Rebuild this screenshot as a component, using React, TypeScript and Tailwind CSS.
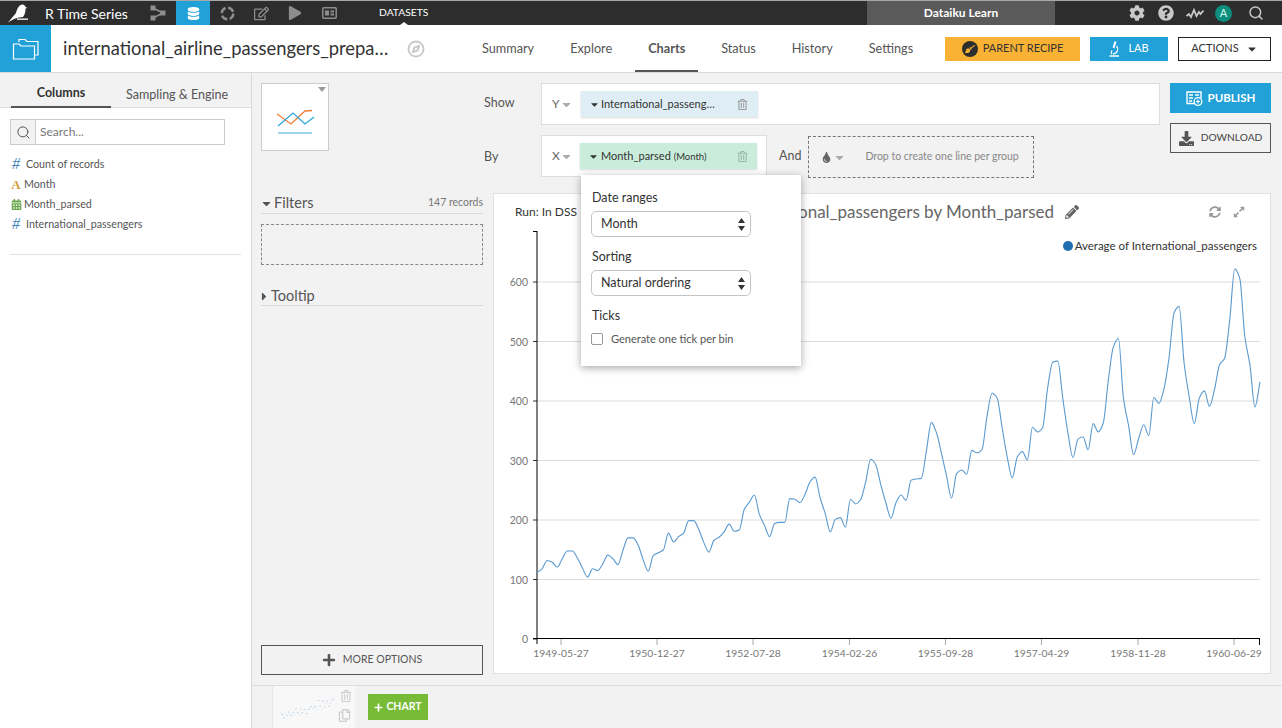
import { Compass, Search } from "lucide-react"
import {
  FaCog,
  FaQuestionCircle,
  FaDatabase,
  FaRegEdit,
  FaPlay,
  FaBroom,
  FaDownload,
  FaPencilAlt,
  FaSyncAlt,
  FaExpandAlt,
  FaPlus,
  FaRegTrashAlt,
  FaTint,
  FaCaretDown,
  FaRegCopy,
  FaCalendarAlt,
} from "react-icons/fa"

const passengers = [
  112, 118, 132, 129, 121, 135, 148, 148, 136, 119, 104, 118, 115, 126, 141, 135, 125, 149, 170, 170, 158, 133, 114,
  140, 145, 150, 178, 163, 172, 178, 199, 199, 184, 162, 146, 166, 171, 180, 193, 181, 183, 218, 230, 242, 209, 191,
  172, 194, 196, 196, 236, 235, 229, 243, 264, 272, 237, 211, 180, 201, 204, 188, 235, 227, 234, 264, 302, 293, 259,
  229, 203, 229, 242, 233, 267, 269, 270, 315, 364, 347, 312, 274, 237, 278, 284, 277, 317, 313, 318, 374, 413, 405,
  355, 306, 271, 306, 315, 301, 356, 348, 355, 422, 465, 467, 404, 347, 305, 336, 340, 318, 362, 348, 363, 435, 491,
  505, 404, 359, 310, 337, 360, 342, 406, 396, 420, 472, 548, 559, 463, 407, 362, 405, 417, 391, 419, 461, 472, 535,
  622, 606, 508, 461, 390, 432,
]

const xTicks = [
  { x: 561, label: "1949-05-27" },
  { x: 657, label: "1950-12-27" },
  { x: 753, label: "1952-07-28" },
  { x: 849.5, label: "1954-02-26" },
  { x: 945.5, label: "1955-09-28" },
  { x: 1041.5, label: "1957-04-29" },
  { x: 1138, label: "1958-11-28" },
  { x: 1234, label: "1960-06-29" },
]

const yTicks = [0, 100, 200, 300, 400, 500, 600]
const toX = (i: number) => 537 + (i * 723) / 143
const toY = (v: number) => 639 - v * 0.595

// monotone cubic, same look as the d3 line in the screenshot
function linePath(values: number[]) {
  const pts = values.map((v, i) => [toX(i), toY(v)])
  const h = pts[1][0] - pts[0][0]
  const slopes = pts.slice(1).map((p, i) => (p[1] - pts[i][1]) / h)
  const tangent = pts.map((_, i) => {
    if (i === 0) return slopes[0]
    if (i === pts.length - 1) return slopes[i - 1]
    const a = slopes[i - 1]
    const b = slopes[i]
    return a * b <= 0 ? 0 : (2 * a * b) / (a + b)
  })
  let d = `M${pts[0][0]} ${pts[0][1]}`
  for (let i = 0; i < pts.length - 1; i++) {
    d += `C${pts[i][0] + h / 3} ${pts[i][1] + (tangent[i] * h) / 3} ${pts[i + 1][0] - h / 3} ${
      pts[i + 1][1] - (tangent[i + 1] * h) / 3
    } ${pts[i + 1][0]} ${pts[i + 1][1]}`
  }
  return d
}

function Bird() {
  return (
    <svg width="22" height="20" viewBox="0 0 22 20" className="text-white">
      <path
        d="M1 19.500L9 10C10 6 12 1.500 15.500 1.500C17 1.500 18 2.500 18.500 4L20.500 5L18.500 5.500C18.500 9 18 11 16 14L12 14.500C8 15 5 17 1 19.500Z"
        fill="currentColor"
      />
      <rect x="10" y="15.500" width="11" height="1.300" fill="currentColor" />
    </svg>
  )
}

function FolderIcon() {
  return (
    <svg width="27" height="22" viewBox="0 0 27 22" fill="none" stroke="white" strokeWidth="1.200">
      <path d="M7 4V1.500H13L15 3.500H26V17H22.500" />
      <path d="M1.500 6H7L9 8H22.500V21H1.500Z" />
    </svg>
  )
}

function FlowIcon() {
  return (
    <svg width="16" height="16" viewBox="0 0 16 16" className="text-[#8d8d8d]">
      <path d="M3 3L13 8L3 13" fill="none" stroke="currentColor" strokeWidth="1.500" />
      <rect x="0.500" y="0.500" width="5" height="5" fill="currentColor" />
      <rect x="0.500" y="10.500" width="5" height="5" fill="currentColor" />
      <rect x="10" y="5.500" width="5.500" height="5" fill="currentColor" />
    </svg>
  )
}

function RingIcon() {
  return (
    <svg width="15" height="15" viewBox="0 0 15 15" className="text-[#8d8d8d]">
      <circle cx="7.500" cy="7.500" r="5.800" fill="none" stroke="currentColor" strokeWidth="2.400" strokeDasharray="6.500 2.600" />
    </svg>
  )
}

function PanelIcon() {
  return (
    <svg width="15" height="12" viewBox="0 0 15 12" className="text-[#8d8d8d]">
      <rect x="0.800" y="0.800" width="13.400" height="10.400" rx="1" fill="none" stroke="currentColor" strokeWidth="1.500" />
      <rect x="3" y="3.500" width="4" height="5" fill="currentColor" />
      <rect x="8.500" y="3.500" width="3.500" height="2" fill="currentColor" />
      <rect x="8.500" y="6.500" width="3.500" height="2" fill="currentColor" />
    </svg>
  )
}

function LabIcon() {
  return (
    <svg width="11" height="16" viewBox="0 0 11 16" fill="none" stroke="white">
      <path d="M6.500 0.500L4.500 7" strokeWidth="2" />
      <path d="M7.500 5C10 8 8.500 12.500 4 13" strokeWidth="1.200" />
      <path d="M3 9.500C2 11 2 12 3 13" strokeWidth="1.200" />
      <path d="M0.500 15H10" strokeWidth="1.500" />
    </svg>
  )
}

function PublishIcon() {
  return (
    <svg width="17" height="15" viewBox="0 0 17 15" className="text-white">
      <path d="M9 12.500H1V1H15V7" fill="none" stroke="currentColor" strokeWidth="1.400" />
      <path d="M3 4H7M3 7H7M3 10H6M9 4H13" stroke="currentColor" strokeWidth="1.400" />
      <circle cx="12" cy="10.500" r="3.800" fill="#22a0d8" stroke="currentColor" strokeWidth="1.300" />
      <path d="M12 8.500V12.500M10 10.500H14" stroke="currentColor" strokeWidth="1.200" />
    </svg>
  )
}

function SelectBox({ value }: { value: string }) {
  return (
    <div className="relative w-[160px] h-[26px]">
      <select
        defaultValue={value}
        className="appearance-none w-full h-full bg-white border border-[#c4c4c4] rounded-[5px] pl-[9px] text-[12.500px] text-[#333] outline-none"
      >
        <option>{value}</option>
      </select>
      <svg width="7" height="13" viewBox="0 0 7 13" className="absolute right-[6px] top-[7px] pointer-events-none">
        <path d="M3.500 0L7 5H0ZM3.500 13L0 8H7Z" fill="#333" />
      </svg>
    </div>
  )
}

function ColumnRow({ icon, label, pad }: { icon: React.ReactNode; label: string; pad: string }) {
  return (
    <div className="flex items-center h-[20px] text-[10.700px] text-[#555]">
      <span className="w-[12px] flex justify-center">{icon}</span>
      <span className={pad}>{label}</span>
    </div>
  )
}

export default function App() {
  const tabs = ["Summary", "Explore", "Charts", "Status", "History", "Settings"]
  const hash = <span className="font-['Liberation_Serif',serif] italic text-[16px] leading-none text-[#3b7fb5]">#</span>

  return (
    <div className="w-[1282px] h-[728px] overflow-hidden flex flex-col bg-[#f2f2f2] text-[#333] font-['Lato','Noto_Sans',sans-serif]">
      <header className="h-[25px] shrink-0 bg-[#2d2d2d] border-t border-[#a8a8a8] flex items-stretch text-white">
        <div className="w-[45px] pl-[7px] flex items-center">
          <Bird />
        </div>
        <div className="w-[97px] flex items-center text-[14px]">R Time Series</div>
        <div className="w-[34px] -ml-[1px] flex items-center justify-center">
          <FlowIcon />
        </div>
        <div className="w-[34px] ml-[1px] flex items-center justify-center bg-[#22a0d8]">
          <FaDatabase size={13} />
        </div>
        <div className="w-[34px] flex items-center justify-center">
          <RingIcon />
        </div>
        <div className="w-[34px] flex items-center justify-center">
          <FaRegEdit size={15} className="text-[#8d8d8d]" />
        </div>
        <div className="w-[34px] flex items-center justify-center">
          <FaPlay size={14} className="text-[#8d8d8d]" />
        </div>
        <div className="w-[34px] flex items-center justify-center">
          <PanelIcon />
        </div>
        <div className="relative ml-[33px] flex items-center text-[10.300px]">
          DATASETS
          <span className="absolute left-1/2 -translate-x-1/2 bottom-0 w-0 h-0 border-x-[4px] border-x-transparent border-b-[3px] border-b-white" />
        </div>
        <div className="flex-1" />
        <div className="w-[188px] bg-[#5a5a5a] flex items-center justify-center text-[12px] font-bold">
          Dataiku Learn
        </div>
        <div className="w-[227px] pl-[67px] flex items-center text-[#c8c8c8]">
          <span className="w-[29px] flex justify-center">
            <FaCog size={16} />
          </span>
          <span className="w-[29px] flex justify-center">
            <FaQuestionCircle size={16} />
          </span>
          <span className="w-[29px] flex justify-center">
            <svg width="18" height="11" viewBox="0 0 18 11">
              <path d="M0.500 8L3 6L5 9L8 2L10.500 8L13 4L14.500 6L17.500 2.500" fill="none" stroke="currentColor" strokeWidth="1.800" />
            </svg>
          </span>
          <span className="w-[29px] flex justify-center">
            <span className="w-[17px] h-[17px] rounded-full bg-[#0b8f7c] text-[11px] flex items-center justify-center text-[#d8f5ee]">
              A
            </span>
          </span>
          <span className="w-[29px] ml-[3px] flex justify-center">
            <Search size={16} strokeWidth={2.200} />
          </span>
        </div>
      </header>

      <nav className="h-[48px] shrink-0 bg-white border-b border-[#d9d9d9] flex items-stretch">
        <div className="w-[51px] bg-[#22a0d8] flex items-center justify-center text-white">
          <FolderIcon />
        </div>
        <div className="w-[431px] pl-[12px] flex items-center">
          <span className="text-[18.400px] text-[#333] whitespace-nowrap w-[344px]">
            international_airline_passengers_prepa…
          </span>
          <Compass size={18} strokeWidth={2.500} className="text-[#c9c9c9]" />
        </div>
        <div className="flex items-stretch gap-[36px] pt-[1px] text-[12.700px] text-[#555]">
          {tabs.map((t) => (
            <div key={t} className={t === "Charts" ? "relative flex items-center font-bold" : "flex items-center"}>
              {t}
              {t === "Charts" && <span className="absolute -left-[13px] -right-[13px] bottom-0 h-[2px] bg-[#555]" />}
            </div>
          ))}
        </div>
        <div className="ml-auto mr-[11px] flex items-center gap-[10px]">
          <button className="w-[135px] h-[24px] bg-[#f9b233] flex items-center justify-center gap-[5px] text-[11px] text-[#333]">
            <span className="w-[16px] h-[16px] rounded-full bg-[#2d2d2d] flex items-center justify-center text-[#f9b233]">
              <FaBroom size={10} />
            </span>
            PARENT RECIPE
          </button>
          <button className="w-[78px] h-[24px] bg-[#22a0d8] flex items-center justify-center gap-[8px] text-[11px] text-white">
            <LabIcon />
            LAB
          </button>
          <button className="w-[93px] h-[24px] border border-[#222] bg-white flex items-center justify-center gap-[7px] text-[11px] text-[#333]">
            ACTIONS
            <FaCaretDown size={12} />
          </button>
        </div>
      </nav>

      <div className="flex-1 min-h-0 flex">
        <aside className="w-[252px] shrink-0 bg-white border-r border-[#d9d9d9] flex flex-col">
          <div className="h-[35px] bg-[#f2f2f2] border-b border-[#ddd] flex pl-[11px] text-[12.500px]">
            <div className="w-[100px] h-[35px] pt-[8px] border-b-2 border-[#555] flex items-center justify-center font-bold">
              Columns
            </div>
            <div className="w-[132px] pt-[10px] flex items-center justify-center text-[#555]">Sampling &amp; Engine</div>
          </div>
          <div className="px-[10px] pt-[11px]">
            <div className="w-[215px] h-[26px] border border-[#ccc] flex">
              <div className="w-[25px] bg-[#f2f2f2] border-r border-[#ccc] flex items-center justify-center text-[#555]">
                <Search size={15} strokeWidth={1.600} />
              </div>
              <input
                placeholder="Search..."
                className="flex-1 min-w-0 pl-[4px] text-[12px] outline-none placeholder:text-[#777]"
              />
            </div>
            <div className="mt-[9px]">
              <ColumnRow icon={hash} label="Count of records" pad="ml-[4px]" />
              <ColumnRow
                icon={<span className="font-['Liberation_Serif',serif] font-bold text-[13px] leading-none text-[#d3a13f]">A</span>}
                label="Month"
                pad="ml-[2px]"
              />
              <ColumnRow icon={<FaCalendarAlt size={11} className="text-[#6aa84f]" />} label="Month_parsed" pad="ml-[2px]" />
              <ColumnRow icon={hash} label="International_passengers" pad="ml-[4px]" />
            </div>
            <div className="mt-[20px] border-t border-[#e2e2e2]" />
          </div>
        </aside>

        <div className="flex-1 min-w-0 flex flex-col">
          <main className="flex-1 min-h-0 flex flex-col pt-[10px] pl-[9px] pr-[11px] pb-[10px]">
            <section className="h-[110px] shrink-0 flex">
              <div className="relative w-[68px] h-[68px] border border-[#ccc] bg-white">
                <span className="absolute right-[2px] top-[3px] w-0 h-0 border-x-[4px] border-x-transparent border-t-[5px] border-t-[#999]" />
                <svg width="40" height="30" viewBox="0 0 40 30" className="absolute left-[14px] top-[25px]">
                  <path d="M1 5L15 15L29 2L36 1.500" fill="none" stroke="#ee7d3a" strokeWidth="1.300" />
                  <path d="M2 17L17 4L29 15L38 8" fill="none" stroke="#2ea6dc" strokeWidth="1.300" />
                  <path d="M2 24H36" stroke="#7cc6ea" strokeWidth="1.500" />
                </svg>
              </div>
              <div className="ml-[155px] flex-1 flex flex-col gap-[10px]">
                <div className="flex items-center h-[42px]">
                  <span className="w-[57px] pb-[2px] text-[12.500px] text-[#555]">Show</span>
                  <div className="flex-1 h-[42px] bg-white border border-[#ddd] flex items-center pl-[10px]">
                    <span className="w-[8px] text-[12px] text-[#666]">Y</span>
                    <FaCaretDown size={13} className="text-[#aaa]" />
                    <div className="ml-[8px] w-[177px] h-[26px] bg-[#dfeef5] shadow-[0_1px_2px_rgba(0,0,0,0.15)] flex items-center pl-[8px] text-[11px] text-[#333]">
                      <FaCaretDown size={11} />
                      <span className="ml-[1px] w-[136px] whitespace-nowrap">International_passeng…</span>
                      <FaRegTrashAlt size={11} className="text-[#999]" />
                    </div>
                  </div>
                </div>
                <div className="flex items-center h-[42px]">
                  <span className="w-[57px] pt-[2px] text-[12.500px] text-[#555]">By</span>
                  <div className="relative w-[226px] h-[42px] bg-white border border-[#ddd] flex items-center pl-[10px]">
                    <span className="w-[8px] text-[12px] text-[#666]">X</span>
                    <FaCaretDown size={13} className="text-[#aaa]" />
                    <div className="ml-[7px] w-[177px] h-[26px] bg-[#c9edda] shadow-[0_1px_2px_rgba(0,0,0,0.15)] flex items-center pl-[8px] text-[11px] text-[#333]">
                      <FaCaretDown size={11} />
                      <span className="ml-[2px] w-[136px] whitespace-nowrap">
                        Month_parsed <span className="text-[9.500px]">(Month)</span>
                      </span>
                      <FaRegTrashAlt size={11} className="text-[#99b5a5]" />
                    </div>
                    <div className="absolute z-10 left-[39px] top-[39px] w-[220px] h-[191px] bg-white shadow-[0_2px_8px_rgba(0,0,0,0.35)] px-[10px] pt-[14px] text-[12.500px] text-[#333]">
                      <div className="h-[22px] pl-[1px]">Date ranges</div>
                      <SelectBox value="Month" />
                      <div className="h-[33px] pt-[12px] pl-[1px] leading-[16px]">Sorting</div>
                      <SelectBox value="Natural ordering" />
                      <div className="h-[33px] pt-[12px] pl-[1px] leading-[16px]">Ticks</div>
                      <label className="flex items-center mt-[2px] text-[11px] text-[#555]">
                        <input
                          type="checkbox"
                          className="appearance-none w-[12px] h-[12px] border border-[#999] rounded-[2px] bg-white"
                        />
                        <span className="ml-[8px]">Generate one tick per bin</span>
                      </label>
                    </div>
                  </div>
                  <span className="ml-[12px] text-[12.500px] text-[#555]">And</span>
                  <div className="ml-[7px] w-[226px] h-[42px] mt-[2px] border border-dashed border-[#777] flex items-center pl-[12px]">
                    <FaTint size={11} className="text-[#666]" />
                    <FaCaretDown size={13} className="ml-[1px] text-[#aaa]" />
                    <span className="ml-[19px] text-[10.500px] text-[#888] whitespace-nowrap">Drop to create one line per group</span>
                  </div>
                </div>
              </div>
              <div className="ml-[10px] w-[101px] flex flex-col gap-[10px]">
                <button className="h-[30px] bg-[#22a0d8] text-white flex items-center justify-center gap-[5px] text-[11.500px] font-bold">
                  <PublishIcon />
                  PUBLISH
                </button>
                <button className="h-[30px] border border-[#555] text-[#444] flex items-center justify-center gap-[7px] text-[10.200px]">
                  <FaDownload size={15} className="text-[#555]" />
                  DOWNLOAD
                </button>
              </div>
            </section>

            <section className="flex-1 min-h-0 flex gap-[10px]">
              <div className="w-[222px] shrink-0 flex flex-col">
                <div className="h-[21px] border-b border-[#d9d9d9] flex items-center text-[#555]">
                  <FaCaretDown size={13} className="text-[#555] -ml-[1px]" />
                  <span className="ml-[1px] text-[14.500px]">Filters</span>
                  <span className="ml-auto text-[10.500px] text-[#777]">147 records</span>
                </div>
                <div className="mt-[10px] h-[41px] border border-dashed border-[#888]" />
                <div className="mt-[22px] h-[19px] border-b border-[#d9d9d9] flex items-center text-[#555]">
                  <FaCaretDown size={13} className="text-[#555] -rotate-90 -ml-[4px]" />
                  <span className="ml-[1px] text-[14.500px]">Tooltip</span>
                </div>
                <button className="mt-auto h-[30px] border border-[#555] flex items-center justify-center gap-[7px] text-[10.500px] text-[#555]">
                  <FaPlus size={14} />
                  MORE OPTIONS
                </button>
              </div>

              <div className="relative flex-1 min-w-0 bg-white border border-[#e0e0e0] mb-[1px]">
                <div className="flex items-center h-[35px] pl-[21px] pr-[25px]">
                  <span className="text-[12px] text-[#333]">Run: In DSS</span>
                  <span className="ml-auto text-[17px] text-[#666] whitespace-nowrap">
                    Average of International_passengers by Month_parsed
                  </span>
                  <FaPencilAlt size={14} className="ml-[11px] text-[#666]" />
                  <FaSyncAlt size={12} className="ml-[130px] text-[#999]" />
                  <FaExpandAlt size={12} className="ml-[12px] text-[#999]" />
                </div>
                <div className="absolute right-[13px] top-[43px] flex items-center text-[11.500px] text-[#333]">
                  <span className="w-[10px] h-[10px] rounded-full bg-[#1f6fb0] mr-[2px]" />
                  Average of International_passengers
                </div>
                <svg width="776" height="444" viewBox="494 229 776 444" className="block">
                  {yTicks.slice(1).map((v) => (
                    <line key={v} x1="537" x2="1260" y1={toY(v)} y2={toY(v)} stroke="#dcdcdc" />
                  ))}
                  {yTicks.map((v) => (
                    <g key={v}>
                      <line x1="533" x2="537" y1={toY(v)} y2={toY(v)} stroke="#333" />
                      <text x="528" y={toY(v) + 4} textAnchor="end" fontSize="10.500" fill="#777">
                        {v}
                      </text>
                    </g>
                  ))}
                  <line x1="537" x2="537" y1="231" y2="644" stroke="#000" />
                  <line x1="533" x2="537" y1="231.500" y2="231.500" stroke="#000" />
                  <line x1="533" x2="1260" y1="638.500" y2="638.500" stroke="#000" />
                  <line x1="1259.500" x2="1259.500" y1="639" y2="645" stroke="#000" />
                  {xTicks.map((t) => (
                    <g key={t.label}>
                      <line x1={t.x} x2={t.x} y1="639" y2="645" stroke="#aaa" />
                      <text x={t.x} y="657" textAnchor="middle" fontSize="10.300" fill="#777">
                        {t.label}
                      </text>
                    </g>
                  ))}
                  <path d={linePath(passengers)} fill="none" stroke="#5a9ad0" strokeWidth="1.100" />
                </svg>
              </div>
            </section>
          </main>

          <footer className="h-[43px] shrink-0 border-t border-[#ddd] flex">
            <div className="relative ml-[20px] w-[83px] bg-[#f8f8f8] border-l border-[#e6e6e6]">
              <svg width="60" height="36" viewBox="0 0 60 36" className="absolute left-[6px] top-[1px]">
                {passengers
                  .filter((_, i) => i % 4 === 1)
                  .map((v, i) => (
                    <circle
                      key={i}
                      cx={2 + i * 1.500}
                      cy={33 - v * 0.04 + (((i * 7) % 5) - 2) * 1.300}
                      r="0.500"
                      fill="#6fa5d3"
                      opacity={i % 3 === 0 ? 0.4 : 0.9}
                    />
                  ))}
              </svg>
              <FaRegTrashAlt size={12} className="absolute left-[67px] top-[4px] text-[#ccc]" />
              <FaRegCopy size={13} className="absolute left-[65px] top-[23px] text-[#ccc]" />
            </div>
            <button className="ml-[13px] mt-[8px] w-[60px] h-[26px] bg-[#78bb37] text-white flex items-center justify-center gap-[3px] text-[10.500px] font-bold">
              <FaPlus size={9} />
              CHART
            </button>
          </footer>
        </div>
      </div>
    </div>
  )
}
